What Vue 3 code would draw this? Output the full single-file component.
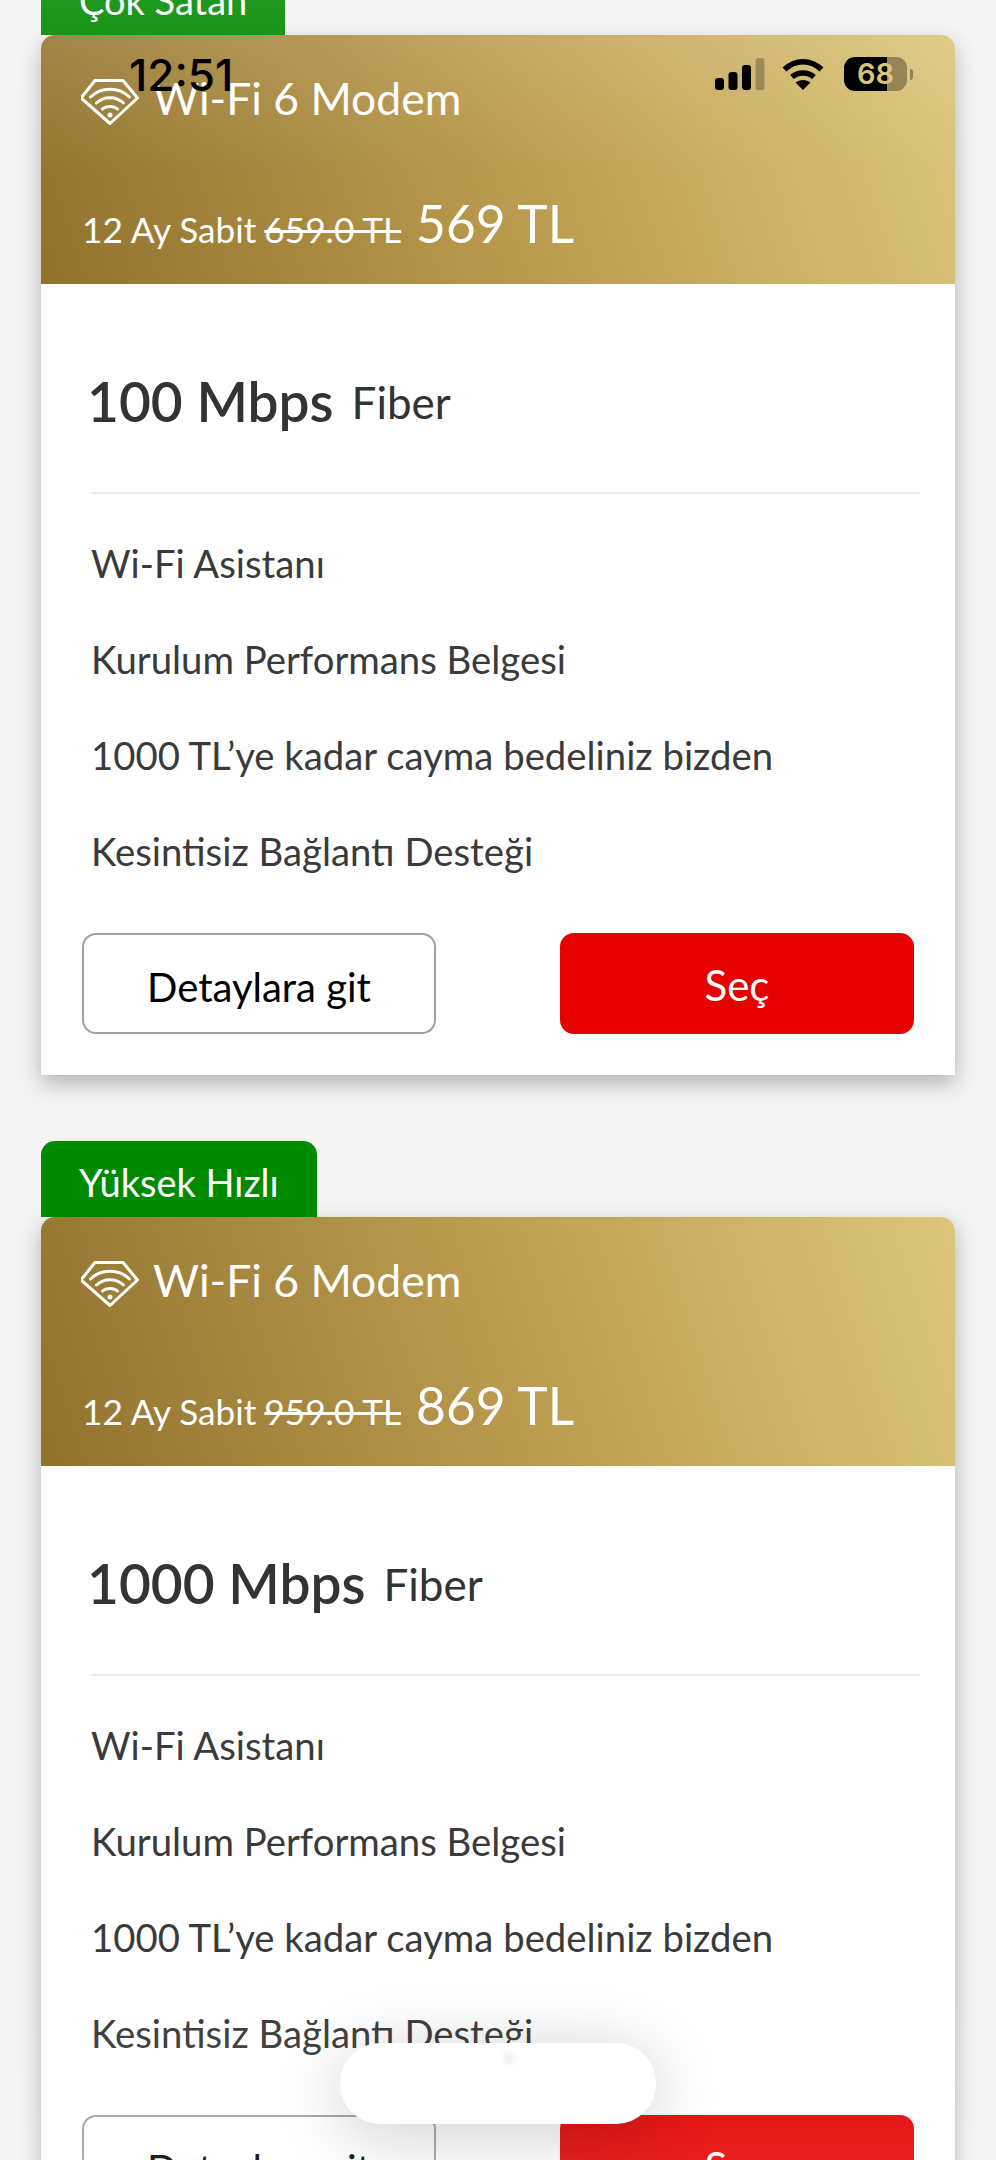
<script setup>
const features = ['Wi-Fi Asistanı', 'Kurulum Performans Belgesi', '1000 TL’ye kadar cayma bedeliniz bizden', 'Kesintisiz Bağlantı Desteği']
const plans = [
  { tag: 'Çok Satan', old: '659.0 TL', price: '569 TL', speed: '100 Mbps' },
  { tag: 'Yüksek Hızlı', old: '959.0 TL', price: '869 TL', speed: '1000 Mbps' }
]
</script>

<template>
  <div class="page">
    <div class="list">
      <section v-for="p in plans" :key="p.speed" class="plan">
        <div class="tag"><span>{{ p.tag }}</span></div>
        <div class="card">
          <header class="head">
            <div class="modem">
              <svg class="gem" viewBox="0 0 58 46" width="58" height="46" fill="none" stroke="#fff" stroke-width="3" stroke-linejoin="round" stroke-linecap="round">
                <path d="M14 1.500H42L56.500 19 29 44.500 0 19Z" />
                <path d="M9.500 18C20 7.500 38 7.500 48.500 18" />
                <path d="M15.500 24C23 17 35 17 42.500 24" />
                <path d="M21.500 30C25.500 26.500 32.500 26.500 36.500 30" />
                <circle cx="29" cy="36" r="2.500" fill="#fff" stroke="none" />
              </svg>
              <span>Wi-Fi 6 Modem</span>
            </div>
            <div class="price">
              <span class="term">12 Ay Sabit</span>
              <s class="old">{{ p.old }}</s>
              <span class="now">{{ p.price }}</span>
            </div>
          </header>
          <div class="body">
            <div class="speed">
              <strong>{{ p.speed }}</strong>
              <span>Fiber</span>
            </div>
            <ul class="features">
              <li v-for="f in features" :key="f">{{ f }}</li>
            </ul>
            <div class="actions">
              <button class="btn ghost">Detaylara git</button>
              <button class="btn primary">Seç</button>
            </div>
          </div>
        </div>
      </section>
    </div>

    <div class="tint-top"></div>
    <div class="tint-bottom"></div>

    <div class="status">
      <span class="time">12:51</span>
      <div class="indicators">
        <svg class="signal" width="50" height="32" viewBox="0 0 50 32">
          <rect x="0" y="20" width="9" height="12" rx="3" />
          <rect x="13.500" y="14" width="9" height="18" rx="3" />
          <rect x="27" y="7" width="9" height="25" rx="3" />
          <rect x="40.500" y="0" width="9" height="32" rx="3" opacity=".25" />
        </svg>
        <svg class="wifi" width="42" height="32" viewBox="0 0 42 32" fill="none" stroke="#000" stroke-width="5.500">
          <path d="M2.500 11.500C13 1 29 1 39.500 11.500" />
          <path d="M10 19C16 13.500 26 13.500 32 19" />
          <path d="M21 32 13.500 24.500C18 21 24 21 28.500 24.500Z" fill="#000" stroke="none" />
        </svg>
        <div class="battery">
          <div class="cell"><span>68</span></div>
          <i class="nub"></i>
        </div>
      </div>
    </div>

    <div class="pill"><i></i></div>
  </div>
</template>

<style>
html, body { margin: 0; background: #f4f4f4; }
</style>

<style scoped>
.page {
  position: relative;
  width: 996px;
  height: 2160px;
  overflow: hidden;
  background: #f4f4f4;
  font-family: Lato, "Noto Sans", sans-serif;
}
.list {
  display: flex;
  flex-direction: column;
  gap: 66px;
  margin-top: -41px;
  padding: 0 41px;
}
.plan { width: 914px; }
.tag {
  display: inline-flex;
  align-items: center;
  height: 76px;
  box-sizing: border-box;
  padding: 5px 38px 0;
  background: #008a00;
  border-radius: 14px 14px 0 0;
  color: #fff;
  font-size: 38px;
  vertical-align: top;
}
.card {
  background: #fff;
  border-radius: 14px 14px 0 0;
  box-shadow: 0 8px 22px rgba(0, 0, 0, .28);
}
.head {
  height: 249px;
  box-sizing: border-box;
  padding: 0 40px;
  display: flex;
  flex-direction: column;
  border-radius: 14px 14px 0 0;
  background: linear-gradient(72deg, #92732e 0%, #a88a42 30%, #bf9f52 55%, #dcc67c 100%);
  color: #fff;
}
.modem {
  display: flex;
  align-items: center;
  gap: 14px;
  margin-top: 44px;
  height: 46px;
  font-size: 44.500px;
}
.modem span { line-height: 46px; padding-bottom: 8px; }
.gem { overflow: hidden; flex: none; }
.price {
  display: flex;
  align-items: baseline;
  margin-top: 67px;
  margin-left: 1px;
  font-size: 35.200px;
}
.old { margin-left: 8px; }
.now { margin-left: 15px; font-size: 51.500px; }
.body { padding: 0 41px; }
.speed {
  display: flex;
  align-items: center;
  gap: 18px;
  height: 208px;
  padding: 27px 0 0 5px;
  box-sizing: border-box;
  line-height: 1;
  color: #333;
}
.speed strong { font-size: 55px; font-weight: 600; }
.speed span { font-size: 44px; }
.features {
  list-style: none;
  margin: 0 -6px 0 9px;
  padding: 21px 0 0;
  border-top: 2px solid #ebebeb;
}
.features li {
  height: 96px;
  line-height: 96px;
  font-size: 38.300px;
  color: #3a3a3a;
}
.actions {
  display: flex;
  justify-content: space-between;
  margin-top: 34px;
  padding-bottom: 41px;
}
.btn {
  width: 354px;
  height: 101px;
  border-radius: 14px;
  font-family: inherit;
  padding: 0;
}
.ghost { background: #fff; border: 2.500px solid #a0a0a0; color: #000; font-size: 40px; padding-top: 6px; }
.primary { background: #e60000; border: 0; color: #fff; font-size: 42px; padding-top: 2px; }
.tint-top {
  position: absolute;
  inset: 0 0 auto 0;
  height: 170px;
  background: linear-gradient(rgba(255, 255, 255, .12), rgba(255, 255, 255, 0));
  pointer-events: none;
}
.tint-bottom {
  position: absolute;
  inset: auto 0 0 0;
  height: 170px;
  background: linear-gradient(rgba(255, 255, 255, 0), rgba(255, 255, 255, .12));
  pointer-events: none;
}
.status {
  position: absolute;
  top: 0;
  left: 129px;
  right: 83px;
  height: 100px;
  display: flex;
  justify-content: space-between;
  align-items: flex-start;
  color: #000;
}
.time {
  margin-top: 50px;
  font-family: Inter, sans-serif;
  font-size: 44px;
  font-weight: 500;
  line-height: 50px;
}
.indicators {
  display: flex;
  align-items: flex-start;
  margin-top: 58px;
  gap: 17px;
}
.battery { display: flex; align-items: center; margin-top: -1px; margin-left: 3px; gap: 3px; }
.cell {
  width: 63px;
  height: 34px;
  border-radius: 11px;
  background: linear-gradient(90deg, #000 0, #000 43px, rgba(0, 0, 0, .32) 43px);
  display: flex;
  align-items: center;
  justify-content: center;
}
.cell span {
  font-family: Inter, sans-serif;
  font-size: 29px;
  font-weight: 600;
  line-height: 34px;
  color: #dbc57a;
}
.nub {
  width: 3px;
  height: 11px;
  border-radius: 0 3px 3px 0;
  background: rgba(0, 0, 0, .35);
}
.pill {
  position: absolute;
  left: 340px;
  top: 2043px;
  width: 316px;
  height: 81px;
  border-radius: 40px;
  background: #fff;
  box-shadow: 0 10px 70px rgba(0, 0, 0, .2);
}
.pill i {
  position: absolute;
  left: 164px;
  top: 10px;
  width: 10px;
  height: 10px;
  background: #eee;
  filter: blur(3px);
}
</style>
